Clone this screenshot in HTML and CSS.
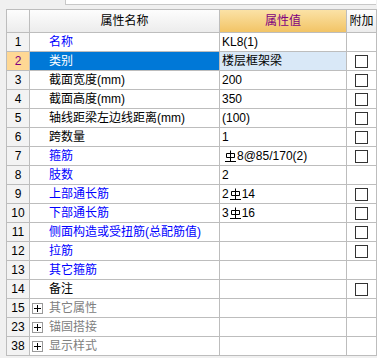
FILE: index.html
```html
<!DOCTYPE html>
<html lang="zh-CN">
<head>
	<meta charset="UTF-8">
	<title>属性编辑器</title>
	<link rel="stylesheet" href="styles.css">
</head>
<body>
	<div class="page">
		<div class="top"><div class="top-box"></div></div>
		<div class="grid">
			<div class="head"></div>
			<div class="head">属性名称</div>
			<div class="head val-head">属性值</div>
			<div class="head">附加</div>

			<div class="no">1</div>
			<div class="name blue">名称</div>
			<div class="val">KL8(1)</div>
			<div class="add"></div>

			<div class="no sel">2</div>
			<div class="name sel">类别</div>
			<div class="val sel">楼层框架梁</div>
			<div class="add"><span class="box"></span></div>

			<div class="no">3</div>
			<div class="name">截面宽度(mm)</div>
			<div class="val">200</div>
			<div class="add"><span class="box"></span></div>

			<div class="no">4</div>
			<div class="name">截面高度(mm)</div>
			<div class="val">350</div>
			<div class="add"><span class="box"></span></div>

			<div class="no">5</div>
			<div class="name">轴线距梁左边线距离(mm)</div>
			<div class="val">(100)</div>
			<div class="add"><span class="box"></span></div>

			<div class="no">6</div>
			<div class="name">跨数量</div>
			<div class="val">1</div>
			<div class="add"><span class="box"></span></div>

			<div class="no">7</div>
			<div class="name blue">箍筋</div>
			<div class="val"><span class="pad"></span><svg class="rb" width="11" height="12" viewBox="0 0 11 12"><path d="M5.5 0.5v11M1.5 3.5h8v4h-8zM0 11.5h11"/></svg>8@85/170(2)</div>
			<div class="add"><span class="box"></span></div>

			<div class="no">8</div>
			<div class="name blue">肢数</div>
			<div class="val">2</div>
			<div class="add"></div>

			<div class="no">9</div>
			<div class="name blue">上部通长筋</div>
			<div class="val">2<svg class="rb" width="11" height="12" viewBox="0 0 11 12"><path d="M5.5 0.5v11M1.5 3.5h8v4h-8zM0 11.5h11"/></svg>14</div>
			<div class="add"><span class="box"></span></div>

			<div class="no">10</div>
			<div class="name blue">下部通长筋</div>
			<div class="val">3<svg class="rb" width="11" height="12" viewBox="0 0 11 12"><path d="M5.5 0.5v11M1.5 3.5h8v4h-8zM0 11.5h11"/></svg>16</div>
			<div class="add"><span class="box"></span></div>

			<div class="no">11</div>
			<div class="name blue">侧面构造或受扭筋(总配筋值)</div>
			<div class="val"></div>
			<div class="add"><span class="box"></span></div>

			<div class="no">12</div>
			<div class="name blue">拉筋</div>
			<div class="val"></div>
			<div class="add"><span class="box"></span></div>

			<div class="no">13</div>
			<div class="name blue">其它箍筋</div>
			<div class="val"></div>
			<div class="add"></div>

			<div class="no">14</div>
			<div class="name">备注</div>
			<div class="val"></div>
			<div class="add"><span class="box"></span></div>

			<div class="no">15</div>
			<div class="name group"><span class="plus"></span>其它属性</div>
			<div class="val"></div>
			<div class="add"></div>

			<div class="no">23</div>
			<div class="name group"><span class="plus"></span>锚固搭接</div>
			<div class="val"></div>
			<div class="add"></div>

			<div class="no">38</div>
			<div class="name group"><span class="plus"></span>显示样式</div>
			<div class="val"></div>
			<div class="add"></div>
		</div>
	</div>
</body>
</html>
```

FILE: styles.css
```css
*{
	box-sizing: border-box;
}
html,body{
	margin: 0;
	padding: 0;
}
body{
	background: #fff;
	color: #000;
	font-family: "Liberation Sans", "Noto Sans CJK SC", sans-serif;
	font-size: 12px;
}
.page{
	width: 377px;
	height: 358px;
	padding-left: 6px;
	background: #f0f0f0;
}
.top{
	height: 9px;
}
.top-box{
	margin-left: 59px;
	width: 311px;
	height: 5px;
	background: #fff;
	border-left: 1px solid #c8c8c8;
	border-bottom: 1px solid #c8c8c8;
}
.grid{
	display: grid;
	grid-template-columns: 23px 190px 127px 30px;
	grid-template-rows: 23px;
	grid-auto-rows: 19px;
	width: 371px;
	background: #fff;
	border-left: 1px solid #bdbdbd;
	border-top: 1px solid #bdbdbd;
}
.grid > div{
	display: flex;
	align-items: center;
	white-space: nowrap;
	overflow: hidden;
	line-height: 18px;
	border-right: 1px solid #bdbdbd;
	border-bottom: 1px solid #bdbdbd;
}
.grid > .head{
	justify-content: center;
	background: linear-gradient(#fdfdfd, #ececec);
}
.grid > .val-head{
	color: #800080;
	background: linear-gradient(#fbe2a6, #f2c466);
}
.grid > .no{
	justify-content: center;
	background: #f3f3f3;
}
.name{
	padding-left: 19px;
}
.val{
	padding-left: 2px;
}
.grid > .add{
	justify-content: center;
}
.blue{
	color: #0000ff;
}
.grid > .no.sel{
	background: #ffd894;
	color: #800080;
}
.name.sel{
	background: #0078d7;
	color: #fff;
}
.val.sel{
	background: #d9e8f7;
}
.box{
	width: 13px;
	height: 13px;
	border: 1px solid #333;
	background: #fff;
}
.pad{
	width: 2px;
}
.rb{
	margin: 0 1px;
	fill: none;
	stroke: #000;
	stroke-width: 1;
}
.name.group{
	padding-left: 2px;
	color: #808080;
}
.plus{
	position: relative;
	flex: none;
	width: 11px;
	height: 11px;
	margin-right: 6px;
	border: 1px solid #999;
	background: #fff;
}
.plus:before,.plus:after{
	content: "";
	position: absolute;
	background: #000;
}
.plus:before{
	left: 1px;
	top: 4px;
	width: 7px;
	height: 1px;
}
.plus:after{
	left: 4px;
	top: 1px;
	width: 1px;
	height: 7px;
}
```
